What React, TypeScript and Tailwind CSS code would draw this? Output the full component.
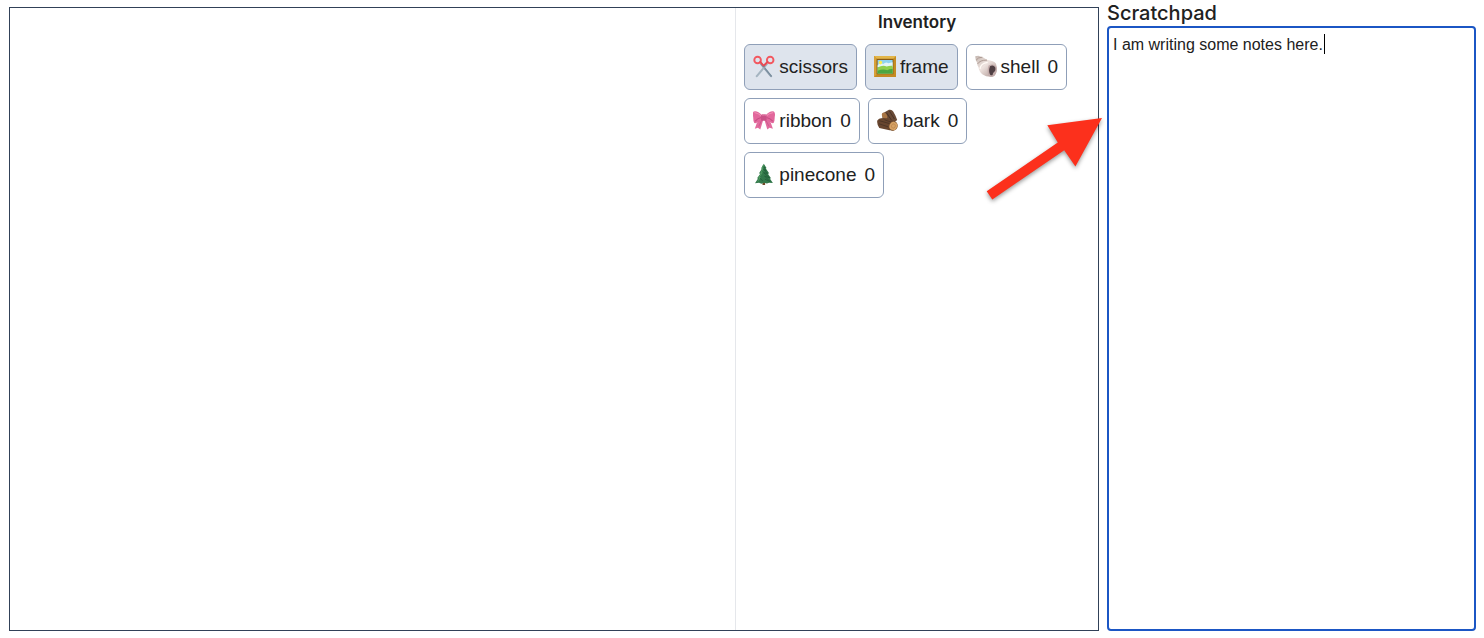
import { useState, type ReactNode } from 'react';

function Scissors() {
  return (
    <svg viewBox="1 1 24 24" className="h-6 w-6" aria-hidden="true">
      <g fill="none" strokeLinecap="round">
        <path d="M9.2 10.2 19 22.2" stroke="#8799a8" strokeWidth="2.1" />
        <path d="M14.8 10.2 4.8 22.2" stroke="#a5b5c1" strokeWidth="2.1" />
        <path d="M12.6 13.8 19.2 21.8" stroke="#6f8798" strokeWidth=".8" />
        <ellipse cx="5.6" cy="6" rx="3.3" ry="3.3" stroke="#f25860" strokeWidth="1.9" />
        <ellipse cx="18.2" cy="6" rx="3.3" ry="3.3" stroke="#f25860" strokeWidth="1.9" />
        <path d="m8.3 8 3.4 3.8L15.5 8" stroke="#e94a53" strokeWidth="2" />
      </g>
      <circle cx="11.9" cy="12.6" r=".8" fill="#718493" />
    </svg>
  );
}

function Frame() {
  return (
    <svg viewBox="1 1 24 24" className="h-6 w-6" aria-hidden="true">
      <path d="M1 2h22v21H1z" fill="#c58d22" />
      <path d="M1 2h22l-3 3H4z" fill="#e3b64a" />
      <path d="m1 23 3-3h16l3 3z" fill="#c48a22" />
      <path d="M1 2v21l3-3V5z" fill="#d7a138" />
      <path d="M3.6 4.8h16.8v15.4H3.6z" fill="#8a5a14" />
      <path d="M4.6 6h15v13.4h-15z" fill="#8fd3f0" />
      <path d="M4.6 11.4q2.4-3.4 5.6-1.4 2.8-2.6 5-.8l4.4-1v5h-15z" fill="#e4f5f6" />
      <path d="M4.6 13.4q5.4-2.6 9-.8 3-1.2 6-.8v7.6h-15z" fill="#8fd04e" />
      <path d="M4.6 16.8q5.4-2.2 9.6-.6 2.6-1.4 5.4-1.2v4.4h-15z" fill="#4da63f" />
      <circle cx="7.4" cy="8.6" r="1.8" fill="#fbee4e" />
    </svg>
  );
}

function Shell() {
  return (
    <svg viewBox="1 1 24 24" className="h-6 w-6" aria-hidden="true">
      <defs>
        <linearGradient id="shell-body" x1="0" y1="0" x2="1" y2="1">
          <stop offset="0" stopColor="#c4b7b0" />
          <stop offset=".45" stopColor="#eee3df" />
          <stop offset="1" stopColor="#a78f8b" />
        </linearGradient>
      </defs>
      <path d="M1.2 2.2 4.4 1.8l4.4 1.4 4.6 2.8q6.4.5 8.6 3.8 1.8 4.6.4 8.2-1.4 4-4.4 4.8-6 .3-9.4-2.3-3.7-3-4-7.1-1.7-1.7-1.4-4.4L1.8 6.2z" fill="url(#shell-body)" />
      <path d="M2.1 6.2q1.8-3 6.2-3M3.5 10q2.4-4 9.5-3.9" fill="none" stroke="#a8948c" strokeWidth=".9" />
      <path d="M6 14.8q.8-5.5 7.7-6.4" fill="none" stroke="#fffaf5" strokeWidth="1.4" />
      <path d="M14.6 11.6q4.6-2.5 7.5.6 1.8 4.9-1.3 9.2-3 2.5-5.8.5-2.6-4.4-.4-10.3z" fill="#c4adac" />
      <path d="M16 12.2q3.2-1.8 5.2 1 .9 3.4-1.2 4.9-1.3 1.1-1.4 2.9-1.6.6-2.4-.3-2.1-3.4-.2-8.5z" fill="#504044" />
    </svg>
  );
}

function Ribbon() {
  return (
    <svg viewBox="1 2 24 24" className="h-6 w-6" aria-hidden="true">
      <path d="M9.3 11.8 4.8 16l-2 5.8 3.1-1.1 2.4 1.8 2.9-9.6zM13.5 11.8l5.4 4.2 2 5.8-3.3-1.1-2.3 1.8-2.8-9.6z" fill="#e26b9e" />
      <path d="m9.6 13.2-2.8 6.2M13.8 13.2l3.3 6.2" fill="none" stroke="#c9558a" strokeWidth=".8" />
      <path d="M10 8.2Q5.5 3.4 1.7 4.5.3 6 1.2 10q-.1 4 1.1 6.1 3.8.5 8-3.4zM13.6 8.2q4.7-4.8 8.3-3.7 1.7 1.3.8 5.5.1 4-1.1 6.1-3.8.5-8-3.4z" fill="#e2679c" />
      <path d="M2.5 5.5q4.5 1 7.1 3.6M21.2 5.5q-4.6 1-7.2 3.6" fill="none" stroke="#ef8fb5" strokeWidth="1.2" />
      <path d="M3.1 14.2q2.1-2.9 6.1-3.7M20.7 14.2q-2.2-2.9-6.2-3.7" fill="none" stroke="#c54d83" strokeWidth="1.1" />
      <rect x="9" y="7.2" width="5.6" height="6.6" rx="1.5" fill="#c95187" />
      <path d="M10.4 8.1q2-.8 3.2.2" fill="none" stroke="#ef91b7" strokeWidth="1" />
    </svg>
  );
}

function Bark() {
  return (
    <svg viewBox="1 1 24 24" className="h-6 w-6" aria-hidden="true">
      <path d="m6.4 5.4 6.6-3.6q3-.6 4.2 1.8l2.2 4 1.8 4.4-4.4 3.4-7.4-1.8-3-3.8z" fill="#6a4a36" />
      <path d="m10.4 4.6 5.2 7.8M13.4 3l5 8" fill="none" stroke="#493226" strokeWidth="1" />
      <ellipse cx="8.6" cy="7.8" rx="2.4" ry="3.4" transform="rotate(-28 8.6 7.8)" fill="#a97645" />
      <path d="M3.1 10.7q5-1.6 10.5.8l6.3 2.7-2 8.3-4.4-.3-10.2-2.3Q.6 16 1.3 12.4z" fill="#68462f" />
      <path d="m3.4 12.7 10.4 3M2.8 15.7l9.6 3.2M8.5 11.8l7.2 2.5" fill="none" stroke="#4b3426" strokeWidth=".9" />
      <ellipse cx="17.3" cy="18" rx="4.4" ry="4.8" transform="rotate(24 17.3 18)" fill="#875c34" />
      <ellipse cx="17.4" cy="18" rx="3.8" ry="4.2" transform="rotate(24 17.4 18)" fill="#d7a365" />
      <ellipse cx="17.4" cy="18" rx="1.9" ry="2.2" transform="rotate(24 17.4 18)" fill="none" stroke="#b98149" strokeWidth=".6" />
    </svg>
  );
}

function Pinecone() {
  return (
    <svg viewBox="1 1 24 24" className="h-6 w-6" aria-hidden="true">
      <path d="M10.5 19h2.6v4h-2.6z" fill="#714a28" />
      <path d="m11.8 1.8 2.9 4.5-1.2-.2 3.8 5.4-1.6-.1 3.5 5-1.5-.1 3.2 4.8-3.8-.4-2.2.9-2.8-.8-2.7.9-2.4-.9-4 .4 3.2-4.9-1.3.1 3.6-5-1.6.1 3.4-5.4-1.1.2z" fill="#32794b" />
      <path d="m11.5 3-1.7 4 1.1-.4-2 4.4 1.3-.3-3.5 5 1.5-.3-2.5 4.1" fill="none" stroke="#4f9a60" strokeWidth="1" />
      <path d="m12.3 5 1.6 3.5-2.2-1 4 4-4.1-.8 6.1 5.2-5.1-1.8 5.5 5.5-5.2-2.4M8 16.4l2.8 2.4" fill="none" stroke="#225f3a" strokeWidth=".9" />
    </svg>
  );
}

type Item = { name: string; icon: ReactNode; count?: number };

const items: Item[] = [
  { name: 'scissors', icon: <Scissors /> },
  { name: 'frame', icon: <Frame /> },
  { name: 'shell', icon: <Shell />, count: 0 },
  { name: 'ribbon', icon: <Ribbon />, count: 0 },
  { name: 'bark', icon: <Bark />, count: 0 },
  { name: 'pinecone', icon: <Pinecone />, count: 0 },
];

function ItemButton({ name, icon, count }: Item) {
  const tool = count === undefined;
  return (
    <button
      type="button"
      className={
        tool
          ? "flex items-center rounded-md border border-[#8f9fb8] bg-[#dee4ed] px-2 py-2 font-['Liberation_Sans',sans-serif] text-[19px] leading-7"
          : "flex items-center rounded-md border border-[#8f9fb8] bg-white px-2 py-2 font-['Liberation_Sans',sans-serif] text-[19px] leading-7"
      }
    >
      {icon}
      <span className="ml-0.5">{name}</span>
      {!tool && <span className="ml-2">{count}</span>}
    </button>
  );
}

function Arrow() {
  return (
    <svg
      viewBox="0 0 130 100"
      className="pointer-events-none absolute top-[102px] -right-3 z-10 h-[100px] w-[130px] drop-shadow-[0_2px_2px_rgba(0,0,0,0.4)]"
      aria-hidden="true"
    >
      <path d="M122 8 67.3 15.3 77.8 32.6 6.7 81.3 12.3 89.5 84.2 40.3 95.4 56.6Z" fill="#fc301c" />
    </svg>
  );
}

export default function App() {
  const [notes, setNotes] = useState('I am writing some notes here.');
  return (
    <div className="grid h-screen grid-cols-[minmax(0,1090fr)_minmax(0,369fr)] gap-2 bg-white pr-2 pb-[7px] pl-[9px] font-['Inter',sans-serif] text-[#212121]">
      <main className="relative mt-[7px] grid grid-cols-[2fr_1fr] border border-slate-700">
        <section aria-label="Canvas" />
        <section className="border-l border-gray-200 px-2">
          <h2 className="pt-px text-center text-[17px] leading-[26px] font-semibold">Inventory</h2>
          <div className="mt-[9px] flex flex-wrap gap-2">
            {items.map((item) => (
              <ItemButton key={item.name} {...item} />
            ))}
          </div>
        </section>
        <Arrow />
      </main>
      <aside className="flex min-h-0 flex-col">
        <label htmlFor="scratchpad" className="text-xl leading-[26px] font-medium">
          Scratchpad
        </label>
        <div className="relative flex flex-1">
          <textarea
            id="scratchpad"
            value={notes}
            onChange={(event) => setNotes(event.target.value)}
            className="w-full flex-1 resize-none rounded-sm border-2 border-[#1b56c4] px-1 py-[5px] font-['Liberation_Sans',sans-serif] text-base leading-6 outline-none"
          />
          <span className="pointer-events-none absolute top-2 left-[217px] h-5 w-px bg-black" />
        </div>
      </aside>
    </div>
  );
}
